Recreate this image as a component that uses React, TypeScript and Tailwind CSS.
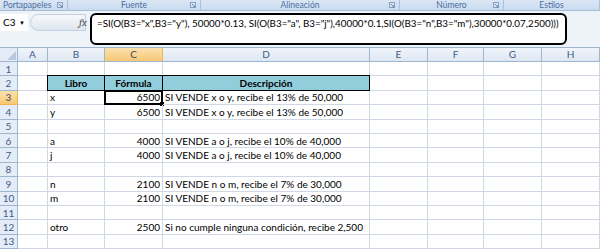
import React from "react";

const cols = [
  { key: "A", w: 30 },
  { key: "B", w: 57 },
  { key: "C", w: 58 },
  { key: "D", w: 207 },
  { key: "E", w: 58 },
  { key: "F", w: 56 },
  { key: "G", w: 58 },
  { key: "H", w: 58 },
];

type Row = { b?: string; c?: string; d?: string };

const rows: Row[] = [
  {},
  { b: "Libro", c: "Fórmula", d: "Descripción" },
  { b: "x", c: "6500", d: "SI VENDE x o y, recibe el 13% de 50,000" },
  { b: "y", c: "6500", d: "SI VENDE x o y, recibe el 13% de 50,000" },
  {},
  { b: "a", c: "4000", d: "SI VENDE a o j, recibe el 10% de 40,000" },
  { b: "j", c: "4000", d: "SI VENDE a o j, recibe el 10% de 40,000" },
  {},
  { b: "n", c: "2100", d: "SI VENDE n o m, recibe el 7% de 30,000" },
  { b: "m", c: "2100", d: "SI VENDE n o m, recibe el 7% de 30,000" },
  {},
  { b: "otro", c: "2500", d: "Si no cumple ninguna condición, recibe 2,500" },
  {},
];

const groups = [
  { name: "Portapapeles", w: 68, launcher: true },
  { name: "Fuente", w: 133, launcher: true },
  { name: "Alineación", w: 199, launcher: true },
  { name: "Número", w: 104, launcher: true },
  { name: "Estilos", w: 96, launcher: false },
];

function Launcher() {
  return (
    <svg width="6" height="6" viewBox="0 0 6 6" className="absolute right-[4px] top-[2px]">
      <rect x="0.5" y="0.5" width="5" height="5" fill="none" stroke="#8aa3c4" strokeWidth="1" />
      <path d="M2 2 L5 5 M3.5 5 H5 V3.5" stroke="#5b7aa5" strokeWidth="0.8" fill="none" />
    </svg>
  );
}

export default function App() {
  return (
    <div
      className="w-[600px] h-[249px] overflow-hidden bg-white"
      style={{ fontFamily: "Lato, 'Liberation Sans', sans-serif" }}
    >
      {/* ribbon group labels */}
      <div className="flex h-[10px] bg-gradient-to-b from-[#dbe6f4] to-[#c9dbf0]">
        {groups.map((g, i) => (
          <div
            key={g.name}
            className={
              i === 0
                ? "relative flex items-center justify-start pl-[3px] border-r border-[#a9c0de] text-[8.5px] leading-none text-[#4d6f9f]"
                : "relative flex items-center justify-center border-r border-[#a9c0de] text-[8.5px] leading-none text-[#4d6f9f]"
            }
            style={{ width: g.w }}
          >
            {g.name}
            {g.launcher && <Launcher />}
          </div>
        ))}
      </div>

      {/* formula bar */}
      <div className="relative h-[37px] border-t border-[#a7bcd6] bg-[#eef3fa]">
        <div className="absolute left-0 top-[3px] flex h-[17px] w-[28px] items-center justify-between bg-white pl-[3px] pr-[3px] text-[10px] text-black">
          <span>C3</span>
          <span className="text-[6px]">▼</span>
        </div>
        <div className="absolute left-[30px] top-[3px] h-[17px] w-[56px] rounded-l-full border border-[#c2cfe0] bg-gradient-to-b from-[#f7f9fc] to-[#dfe6ef]" />
        <div className="absolute left-[79px] top-[4px] text-[11px] italic text-[#555] font-serif">
          fx
        </div>
        <div className="absolute left-[90px] top-[2px] flex h-[32px] w-[477px] rounded-[6px] border-2 border-black bg-white pl-[5px] pt-[4px] text-[9.8px] leading-none text-black whitespace-nowrap">
          =SI(O(B3="x",B3="y"), 50000*0.13, SI(O(B3="a", B3="j"),40000*0.1,SI(O(B3="n",B3="m"),30000*0.07,2500)))
        </div>
      </div>

      {/* column headers */}
      <div className="flex h-[15px] border-y border-[#9eb6ce]">
        <div className="relative w-[18px] border-r border-[#9eb6ce] bg-[#e4ecf7]">
          <div className="absolute bottom-[1px] right-[1px] h-0 w-0 border-b-[9px] border-l-[9px] border-b-[#b8c9de] border-l-transparent" />
        </div>
        {cols.map((c) => (
          <div
            key={c.key}
            className={
              c.key === "C"
                ? "flex items-center justify-center border-r border-[#f2b451] bg-gradient-to-b from-[#fbe1ae] to-[#f7c874] text-[10px] text-[#3c4c60]"
                : "flex items-center justify-center border-r border-[#9eb6ce] bg-gradient-to-b from-[#f1f5fb] to-[#dde7f3] text-[10px] text-[#3e5b85]"
            }
            style={{ width: c.w }}
          >
            {c.key}
          </div>
        ))}
      </div>

      {/* grid */}
      <div className="flex flex-col">
        {rows.map((r, i) => {
          const n = i + 1;
          const header = n === 2;
          return (
            <div key={n} className="flex h-[14.4px] text-[10px] leading-none">
              <div
                className={
                  n === 3
                    ? "flex w-[18px] items-center justify-center border-b border-r border-[#f2b451] bg-gradient-to-b from-[#fbe1ae] to-[#f7c874] text-[#3c4c60]"
                    : "flex w-[18px] items-center justify-center border-b border-r border-[#9eb6ce] bg-[#e4ecf7] text-[#3e5b85]"
                }
              >
                {n}
              </div>
              {cols.map((c) => {
                const val = c.key === "B" ? r.b : c.key === "C" ? r.c : c.key === "D" ? r.d : undefined;
                const inTable = header && (c.key === "B" || c.key === "C" || c.key === "D");
                const selected = n === 3 && c.key === "C";
                let cls = "relative flex items-center border-b border-r border-[#d0d7e5] px-[2px] whitespace-nowrap";
                if (inTable) cls = "relative flex items-center justify-center border border-black -ml-px -mt-px bg-[#92cddc] font-bold text-black";
                else if (c.key === "C") cls += " justify-end";
                return (
                  <div key={c.key} className={cls} style={{ width: inTable ? c.w + 1 : c.w }}>
                    {val}
                    {selected && (
                      <div className="absolute -left-px -top-px -bottom-px -right-px border-2 border-black">
                        <div className="absolute -bottom-[3px] -right-[3px] h-[4px] w-[4px] bg-black" />
                      </div>
                    )}
                  </div>
                );
              })}
            </div>
          );
        })}
        <div className="flex h-[14.4px]">
          <div className="w-[18px] border-r border-[#9eb6ce] bg-[#e4ecf7]" />
          {cols.map((c) => (
            <div key={c.key} className="border-r border-[#d0d7e5]" style={{ width: c.w }} />
          ))}
        </div>
      </div>
    </div>
  );
}
